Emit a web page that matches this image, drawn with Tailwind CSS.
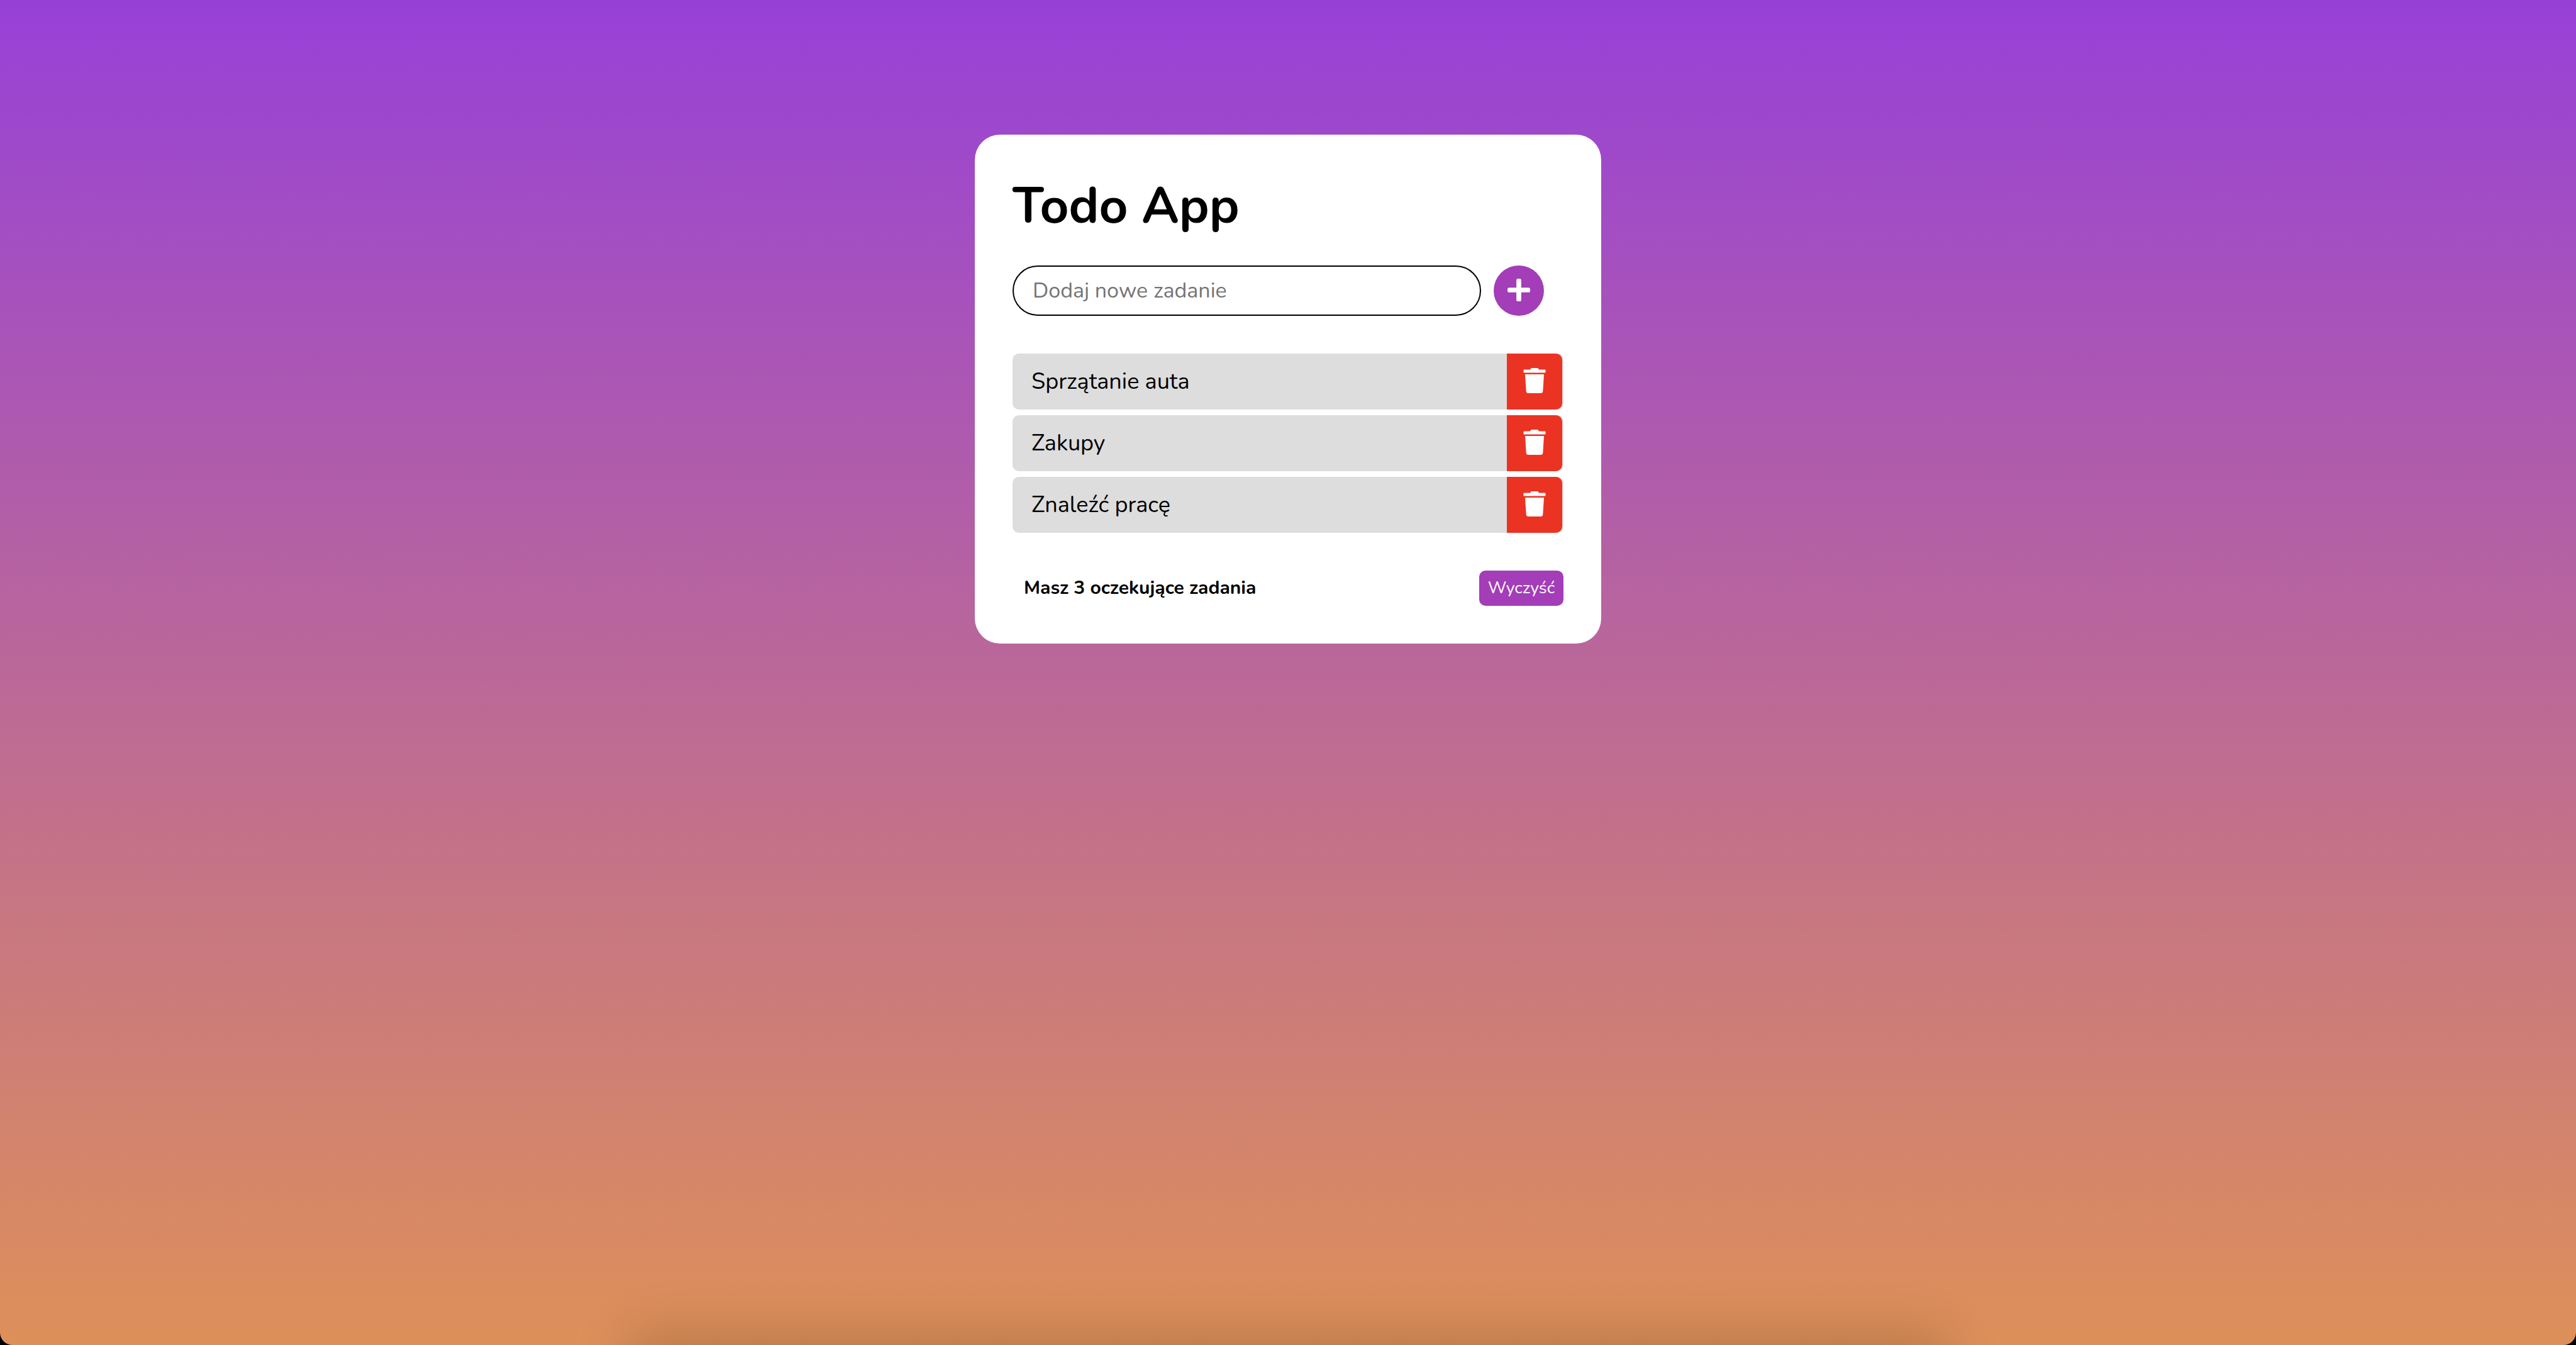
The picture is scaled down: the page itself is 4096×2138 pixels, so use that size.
<!DOCTYPE html>
<html lang="pl">
<head>
<meta charset="utf-8">
<meta name="viewport" content="width=device-width, initial-scale=1">
<title>Todo App</title>
<script src="https://cdn.jsdelivr.net/npm/@tailwindcss/browser@4"></script>
</head>
<body class="bg-black font-['Nunito','Lato',sans-serif] text-black">
<svg class="hidden" aria-hidden="true">
  <symbol id="trash" viewBox="0 0 448 512">
    <path fill="currentColor" d="M432 32H312l-9.400-18.700A24 24 0 0 0 281.100 0H166.800a23.720 23.720 0 0 0-21.400 13.300L136 32H16A16 16 0 0 0 0 48v32a16 16 0 0 0 16 16h416a16 16 0 0 0 16-16V48a16 16 0 0 0-16-16zM53.200 467a48 48 0 0 0 47.900 45h245.800a48 48 0 0 0 47.900-45L416 128H32z"/>
  </symbol>
  <symbol id="plus" viewBox="0 0 448 448">
    <path fill="currentColor" d="M416 176H272V32a32 32 0 0 0-32-32h-32a32 32 0 0 0-32 32v144H32a32 32 0 0 0-32 32v32a32 32 0 0 0 32 32h144v144a32 32 0 0 0 32 32h32a32 32 0 0 0 32-32V272h144a32 32 0 0 0 32-32v-32a32 32 0 0 0-32-32z"/>
  </symbol>
</svg>
<div class="relative min-h-screen overflow-hidden rounded-b-[20px] bg-linear-to-b/srgb from-[#9740d8] to-[#de9059] px-10 pt-[214px]">
  <main class="mx-auto w-full max-w-[996px] rounded-[40px] bg-white p-[60px]">
    <h1 class="text-[80px] leading-[108px] font-bold">Todo App</h1>
    <form class="mt-10 flex items-center gap-5">
      <input type="text" aria-label="Dodaj nowe zadanie" placeholder="Dodaj nowe zadanie" class="h-20 w-full max-w-[745px] rounded-full border-2 border-black bg-white px-[30px] text-[34px] placeholder:text-[#757575]">
      <button type="button" aria-label="Dodaj" class="flex size-20 shrink-0 items-center justify-center rounded-full bg-[#a33db8] pb-[2px] text-white"><svg class="size-9"><use href="#plus"/></svg></button>
    </form>
    <ul class="mt-[60px] flex flex-col gap-[9px] text-[36px]">
      <li class="flex h-[89px] items-center rounded-[10px] bg-[#ddd] pr-[2px] pl-[30px]">
        <span class="grow">Sprzątanie auta</span>
        <button type="button" aria-label="Usuń" class="flex h-full w-[88px] items-center justify-center rounded-r-[10px] bg-[#eb3323] pb-[3px] text-white"><svg class="h-10 w-9"><use href="#trash"/></svg></button>
      </li>
      <li class="flex h-[89px] items-center rounded-[10px] bg-[#ddd] pr-[2px] pl-[30px]">
        <span class="grow">Zakupy</span>
        <button type="button" aria-label="Usuń" class="flex h-full w-[88px] items-center justify-center rounded-r-[10px] bg-[#eb3323] pb-[3px] text-white"><svg class="h-10 w-9"><use href="#trash"/></svg></button>
      </li>
      <li class="flex h-[89px] items-center rounded-[10px] bg-[#ddd] pr-[2px] pl-[30px]">
        <span class="grow">Znaleźć pracę</span>
        <button type="button" aria-label="Usuń" class="flex h-full w-[88px] items-center justify-center rounded-r-[10px] bg-[#eb3323] pb-[3px] text-white"><svg class="h-10 w-9"><use href="#trash"/></svg></button>
      </li>
    </ul>
    <footer class="mt-[60px] flex items-center justify-between pl-[18px]">
      <p class="text-[30px] leading-[56px] font-bold">Masz 3 oczekujące zadania</p>
      <button type="button" class="h-14 w-[134px] rounded-[10px] bg-[#a33db8] text-[27px] text-white">Wyczyść</button>
    </footer>
  </main>
  <div class="absolute inset-x-[1010px] top-full h-20 shadow-[0_0_90px_10px_rgb(0_0_0/0.2)]"></div>
</div>
</body>
</html>
